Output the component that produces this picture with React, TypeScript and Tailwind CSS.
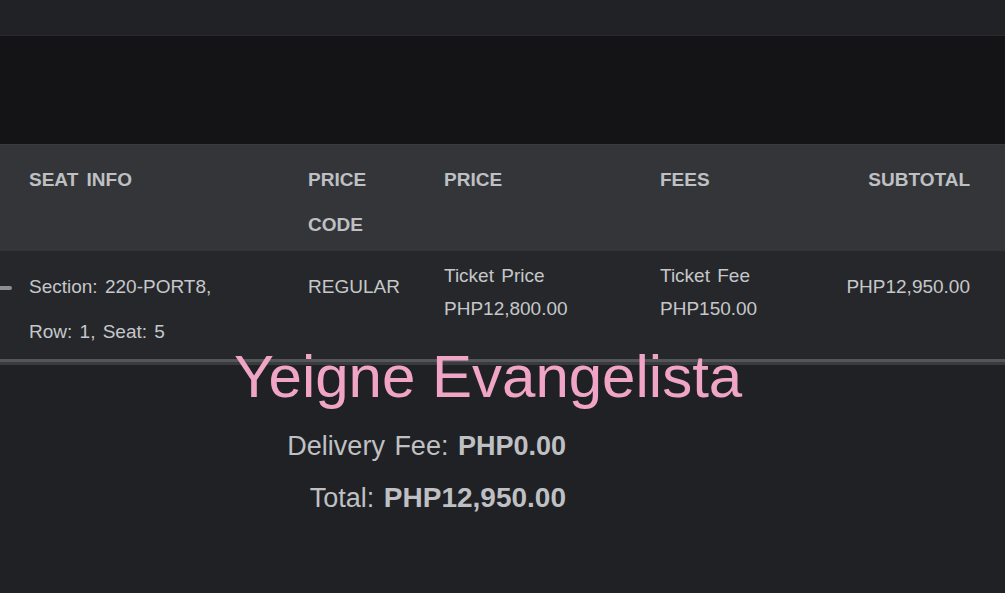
import React from "react";

export default function App() {
  const font = { fontFamily: '"Liberation Sans", Arial, sans-serif' };
  return (
    <div className="w-[1005px] h-[593px] bg-[#202124] overflow-hidden relative" style={font}>
      <div className="h-[36px] bg-[#212226] border-b border-[#28292c]" />
      <div className="h-[108px] bg-[#141416]" />
      {/* header */}
      <div className="h-[107px] bg-[#343539] border-t border-[#3a3b3e] flex text-[#bfc0c3] font-bold text-[19px] leading-[45px] [word-spacing:3px] pt-[12px]">
        <div className="w-[308px] pl-[29px]">SEAT INFO</div>
        <div className="w-[136px]">PRICE<br />CODE</div>
        <div className="w-[216px]">PRICE</div>
        <div className="w-[160px]">FEES</div>
        <div className="w-[150px] text-right">SUBTOTAL</div>
      </div>
      {/* row */}
      <div className="h-[108px] bg-[#25272a] flex text-[#c6c7ca] text-[19px] [word-spacing:2px] relative">
        <div className="absolute left-0 top-[35px] w-[12px] h-[4px] bg-[#8d8e91] rounded-r-sm" />
        <div className="w-[308px] pl-[29px] pt-[13px] leading-[45px]">
          Section: 220-PORT8,<br />Row: 1, Seat: 5
        </div>
        <div className="w-[136px] pt-[13px] leading-[45px]">REGULAR</div>
        <div className="w-[216px] pt-[8px] leading-[33px]">
          Ticket Price<br />PHP12,800.00
        </div>
        <div className="w-[160px] pt-[8px] leading-[33px]">
          Ticket Fee<br />PHP150.00
        </div>
        <div className="w-[150px] pt-[13px] leading-[45px] text-right">PHP12,950.00</div>
      </div>
      <div className="h-[3px] bg-[#555659]" />
      <div className="h-[3px] bg-[#3a3b3e]" />
      {/* totals */}
      <div className="w-[566px] pt-[55px] flex flex-col items-end text-[#bfc0c3] text-[27px] [word-spacing:2px]">
        <div className="leading-[52px]">
          Delivery Fee: <span className="font-bold">PHP0.00</span>
        </div>
        <div className="leading-[52px]">
          Total: <span className="font-bold text-[28px]">PHP12,950.00</span>
        </div>
      </div>
      <div className="absolute left-[234px] top-[347px] text-[60px] leading-[59px] text-[#f0a5c6] whitespace-nowrap">
        Yeigne Evangelista
      </div>
    </div>
  );
}
